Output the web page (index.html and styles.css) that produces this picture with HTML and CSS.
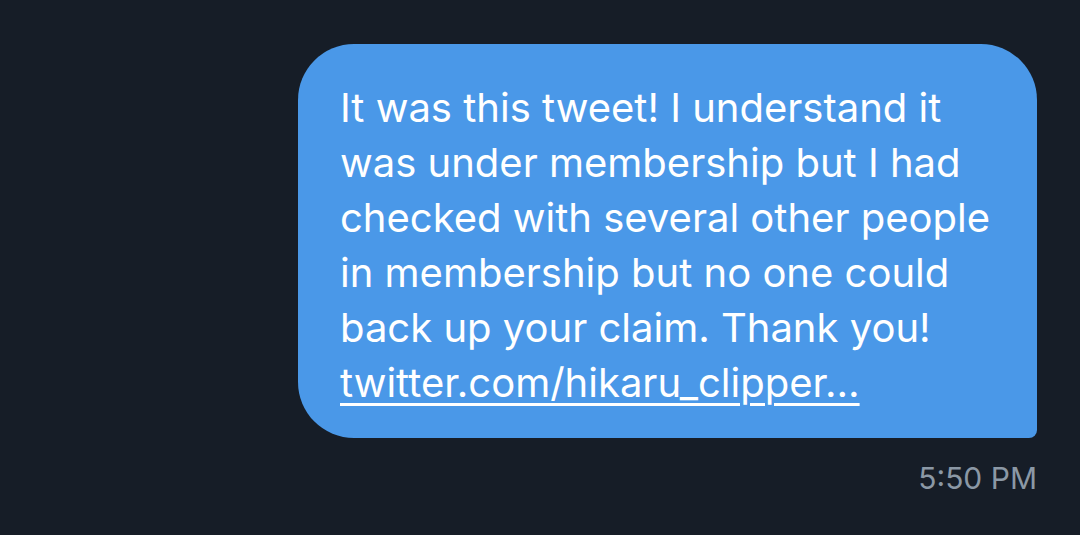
FILE: index.html
```html
<!DOCTYPE html>
<html lang="en">
<head>
  <meta charset="UTF-8" />
  <title>Message</title>
  <meta name="viewport" content="width=device-width,initial-scale=1" />
  <link rel="stylesheet" href="styles.css">
</head>
<body>
  <div class="thread">
    <div class="message sent">
      <div class="bubble">
        It was this tweet! I understand it was under membership but I had checked with several other people in membership but no one could back up your claim. Thank you!
        <a href="#" class="link">twitter.com/hikaru_clipper…</a>
      </div>
      <div class="time">5:50 PM</div>
    </div>
  </div>
</body>
</html>
```

FILE: styles.css
```css
html, body {
  margin: 0;
  height: 100%;
}
body {
  background: #161d27;
  font-family: Inter, "Noto Sans", sans-serif;
  color: #fff;
}
.thread {
  display: flex;
  flex-direction: column;
  padding: 44px 43px 0 0;
}
.message.sent {
  display: flex;
  flex-direction: column;
  align-items: flex-end;
}
.bubble {
  box-sizing: border-box;
  width: 739px;
  background: #4a98e8;
  border-radius: 56px 56px 8px 56px;
  padding: 36px 36px 28px 42px;
  font-size: 40px;
  line-height: 55px;
}
.link {
  color: #fff;
  text-decoration: underline;
  text-decoration-thickness: 3px;
  text-underline-offset: 6px;
}
.time {
  margin-top: 22px;
  font-size: 30px;
  color: #8b98a5;
}
```
